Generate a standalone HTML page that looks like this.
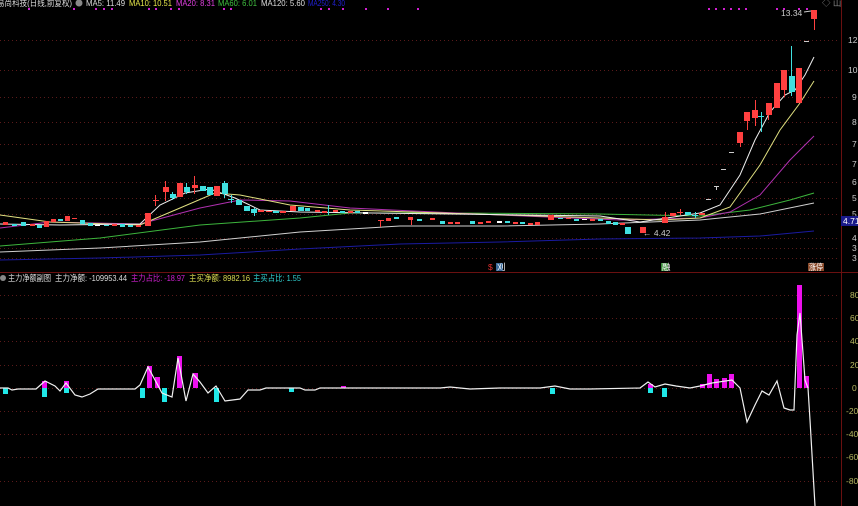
<!DOCTYPE html>
<html><head><meta charset="utf-8"><style>
html,body{margin:0;padding:0;background:#000;width:858px;height:506px;overflow:hidden}
svg{display:block}
text{font-family:"Liberation Sans","Noto Sans CJK SC",sans-serif;font-size:8.5px}
</style></head><body>
<svg width="858" height="506" viewBox="0 0 858 506" xmlns="http://www.w3.org/2000/svg">
<rect width="858" height="506" fill="#000"/>
<g stroke="#5a1a1a" stroke-width="1" stroke-dasharray="1,3">
<line x1="0" y1="40.5" x2="840" y2="40.5"/><line x1="0" y1="70.5" x2="840" y2="70.5"/><line x1="0" y1="97.5" x2="840" y2="97.5"/><line x1="0" y1="122.5" x2="840" y2="122.5"/><line x1="0" y1="144.5" x2="840" y2="144.5"/><line x1="0" y1="164.5" x2="840" y2="164.5"/><line x1="0" y1="182.5" x2="840" y2="182.5"/><line x1="0" y1="198.5" x2="840" y2="198.5"/><line x1="0" y1="214.5" x2="840" y2="214.5"/><line x1="0" y1="238.5" x2="840" y2="238.5"/><line x1="0" y1="248.5" x2="840" y2="248.5"/><line x1="0" y1="258.5" x2="840" y2="258.5"/>
<line x1="0" y1="295.5" x2="840" y2="295.5"/><line x1="0" y1="318.5" x2="840" y2="318.5"/><line x1="0" y1="341.5" x2="840" y2="341.5"/><line x1="0" y1="365.5" x2="840" y2="365.5"/><line x1="0" y1="388.5" x2="840" y2="388.5"/><line x1="0" y1="411.5" x2="840" y2="411.5"/><line x1="0" y1="434.5" x2="840" y2="434.5"/><line x1="0" y1="457.5" x2="840" y2="457.5"/><line x1="0" y1="481.5" x2="840" y2="481.5"/>
</g>
<line x1="841.5" y1="0" x2="841.5" y2="506" stroke="#6a1010"/>
<line x1="0" y1="272.5" x2="858" y2="272.5" stroke="#6a1010"/>
<!-- header -->
<text x="-3" y="6" fill="#ddd" textLength="75" lengthAdjust="spacingAndGlyphs">易尚科技(日线,前复权)</text>
<circle cx="79" cy="3" r="3.5" fill="#888"/>
<text x="86" y="6" fill="#ddd" textLength="39" lengthAdjust="spacingAndGlyphs">MA5: 11.49</text>
<text x="129" y="6" fill="#e8e84a" textLength="43" lengthAdjust="spacingAndGlyphs">MA10: 10.51</text>
<text x="176" y="6" fill="#e040e0" textLength="39" lengthAdjust="spacingAndGlyphs">MA20: 8.31</text>
<text x="218" y="6" fill="#40c040" textLength="39" lengthAdjust="spacingAndGlyphs">MA60: 6.01</text>
<text x="261" y="6" fill="#ddd" textLength="44" lengthAdjust="spacingAndGlyphs">MA120: 5.60</text>
<text x="308" y="6" fill="#2020d0" textLength="37" lengthAdjust="spacingAndGlyphs">MA250: 4.30</text>
<g fill="#d020d0">
<rect x="28" y="8" width="2" height="2"/><rect x="73" y="8" width="2" height="2"/><rect x="95" y="8" width="2" height="2"/><rect x="103" y="8" width="2" height="2"/><rect x="111" y="8" width="2" height="2"/><rect x="148" y="8" width="2" height="2"/><rect x="155" y="8" width="2" height="2"/><rect x="170" y="8" width="2" height="2"/><rect x="178" y="8" width="2" height="2"/><rect x="223" y="8" width="2" height="2"/><rect x="230" y="8" width="2" height="2"/><rect x="320" y="8" width="2" height="2"/><rect x="328" y="8" width="2" height="2"/><rect x="342" y="8" width="2" height="2"/><rect x="365" y="8" width="2" height="2"/><rect x="387" y="8" width="2" height="2"/><rect x="417" y="8" width="2" height="2"/><rect x="708" y="8" width="2" height="2"/><rect x="715" y="8" width="2" height="2"/><rect x="723" y="8" width="2" height="2"/><rect x="730" y="8" width="2" height="2"/><rect x="738" y="8" width="2" height="2"/><rect x="745" y="8" width="2" height="2"/><rect x="776" y="8" width="2" height="2"/><rect x="783" y="8" width="2" height="2"/><rect x="798" y="8" width="2" height="2"/><rect x="806" y="8" width="2" height="2"/>
</g>
<text x="822" y="6" fill="#888">◇ 山</text>
<g fill="#ccc">
<text x="848" y="43">12</text><text x="848" y="73">10</text><text x="852" y="100">9</text><text x="852" y="125">8</text><text x="852" y="147">7</text><text x="852" y="167">7</text><text x="852" y="185">6</text><text x="852" y="201">5</text><text x="852" y="217">5</text><text x="852" y="241">4</text><text x="852" y="251">3</text><text x="852" y="261">3</text>
</g>
<rect x="841" y="216" width="17" height="10" fill="#1a1a8a"/><text x="843" y="224" fill="#fff">4.71</text>
<g fill="none" stroke-width="1">
<polyline stroke="#1a1aa0" points="0,260 100,258 200,255 300,249 400,244 500,242 600,239 700,238 760,236 814,231"/>
<polyline stroke="#cfcfcf" points="0,252 100,248 200,242 300,232 400,226 500,226 600,224 700,220 760,214 814,203"/>
<polyline stroke="#3cb43c" points="0,246 100,238 200,225 300,218 350,213 450,213 600,214 700,216 750,210 790,200 814,193"/>
<polyline stroke="#b030b0" points="0,228 50,222 140,224 200,208 240,200 290,201 350,208 500,215 620,220 700,218 730,212 760,195 790,160 814,136"/>
<polyline stroke="#e0e080" points="0,215 50,222 140,225 180,208 215,193 240,195 290,205 350,210 600,218 660,220 700,218 730,207 760,165 780,130 800,103 814,81"/>
<polyline stroke="#eeeeee" points="0,224 60,225 140,224 160,205 185,193 210,189 235,198 260,210 300,212 600,216 640,222 700,213 720,205 740,175 755,140 770,112 785,95 795,90 805,75 814,57"/>
</g>
<g>
<rect x="3" y="222" width="5" height="3" fill="#ff4040"/><rect x="12" y="224" width="5" height="2" fill="#40e0e0"/><rect x="21" y="222" width="5" height="4" fill="#40e0e0"/><rect x="30" y="224" width="5" height="2" fill="#ff4040"/><rect x="37" y="225" width="5" height="3" fill="#40e0e0"/><rect x="44" y="221" width="5" height="6" fill="#ff4040"/><rect x="51" y="219" width="5" height="3" fill="#ff4040"/><rect x="58" y="219" width="5" height="2" fill="#40e0e0"/><rect x="65" y="216" width="5" height="5" fill="#ff4040"/><rect x="72" y="218" width="5" height="1" fill="#ff4040"/><rect x="80" y="220" width="5" height="4" fill="#40e0e0"/><rect x="88" y="223" width="5" height="3" fill="#40e0e0"/><rect x="95" y="225" width="5" height="1" fill="#fff"/><rect x="104" y="225" width="5" height="1" fill="#40e0e0"/><rect x="112" y="224" width="5" height="2" fill="#ff4040"/><rect x="120" y="224" width="5" height="3" fill="#40e0e0"/><rect x="128" y="225" width="5" height="2" fill="#40e0e0"/><rect x="136" y="225" width="5" height="2" fill="#ff4040"/>
</g>
<g stroke-width="1">
<rect x="145" y="213" width="6" height="13" fill="#ff4040"/>
<line x1="155.5" y1="195" x2="155.5" y2="206" stroke="#ff4040"/><rect x="153" y="200" width="6" height="1" fill="#ff4040"/>
<line x1="165.5" y1="181" x2="165.5" y2="201" stroke="#ff4040"/><rect x="163" y="187" width="6" height="5" fill="#ff4040"/>
<line x1="172.5" y1="192" x2="172.5" y2="200" stroke="#40e0e0"/><rect x="170" y="194" width="6" height="4" fill="#40e0e0"/>
<rect x="177" y="183" width="6" height="14" fill="#ff4040"/>
<line x1="186.5" y1="183" x2="186.5" y2="194" stroke="#40e0e0"/><rect x="184" y="187" width="6" height="5" fill="#40e0e0"/>
<line x1="194.5" y1="176" x2="194.5" y2="194" stroke="#ff4040"/><rect x="192" y="185" width="6" height="3" fill="#ff4040"/>
<rect x="200" y="186" width="6" height="5" fill="#40e0e0"/>
<rect x="207" y="187" width="6" height="8" fill="#40e0e0"/>
<rect x="214" y="186" width="6" height="10" fill="#ff4040"/>
<line x1="224.5" y1="181" x2="224.5" y2="198" stroke="#40e0e0"/><rect x="222" y="183" width="6" height="11" fill="#40e0e0"/>
<line x1="231.5" y1="195" x2="231.5" y2="203" stroke="#40e0e0"/><rect x="228" y="199" width="6" height="1" fill="#40e0e0"/>
<rect x="236" y="200" width="6" height="5" fill="#40e0e0"/>
<rect x="244" y="206" width="6" height="5" fill="#40e0e0"/>
<line x1="254.5" y1="208" x2="254.5" y2="216" stroke="#40e0e0"/><rect x="251" y="209" width="6" height="4" fill="#40e0e0"/>
<rect x="258" y="210" width="6" height="2" fill="#ff4040"/>
<rect x="266" y="211" width="6" height="1" fill="#ff4040"/>
<rect x="273" y="211" width="6" height="2" fill="#40e0e0"/>
<rect x="280" y="211" width="6" height="2" fill="#ff4040"/>
<rect x="290" y="206" width="6" height="5" fill="#ff4040"/>
<rect x="298" y="207" width="6" height="4" fill="#40e0e0"/>
</g>
<g>
<rect x="305" y="208" width="5" height="3" fill="#40e0e0"/><rect x="315" y="210" width="5" height="2" fill="#ff4040"/><rect x="322" y="211" width="5" height="2" fill="#ff4040"/><line x1="328.5" y1="205" x2="328.5" y2="215" stroke="#40e0e0"/><rect x="333" y="210" width="5" height="2" fill="#ff4040"/><rect x="340" y="211" width="5" height="2" fill="#40e0e0"/><rect x="348" y="211" width="5" height="2" fill="#ff4040"/><rect x="355" y="211" width="5" height="2" fill="#40e0e0"/><rect x="363" y="212" width="5" height="2" fill="#fff"/>
<line x1="380.5" y1="220" x2="380.5" y2="227" stroke="#ff4040"/><rect x="378" y="220" width="6" height="1" fill="#ff4040"/><rect x="386" y="218" width="5" height="3" fill="#ff4040"/><rect x="394" y="217" width="5" height="2" fill="#40e0e0"/><rect x="408" y="217" width="5" height="3" fill="#ff4040"/><line x1="411.5" y1="217" x2="411.5" y2="225" stroke="#ff4040"/><rect x="417" y="219" width="5" height="2" fill="#40e0e0"/><rect x="430" y="218" width="5" height="2" fill="#ff4040"/><rect x="440" y="221" width="5" height="3" fill="#40e0e0"/><rect x="448" y="222" width="5" height="2" fill="#ff4040"/><rect x="455" y="222" width="5" height="2" fill="#ff4040"/><rect x="470" y="221" width="5" height="3" fill="#40e0e0"/><rect x="478" y="222" width="5" height="2" fill="#ff4040"/><rect x="486" y="221" width="5" height="2" fill="#ff4040"/><rect x="497" y="221" width="5" height="2" fill="#fff"/><rect x="505" y="221" width="5" height="2" fill="#40e0e0"/><rect x="513" y="222" width="5" height="2" fill="#ff4040"/><rect x="520" y="222" width="5" height="2" fill="#40e0e0"/><rect x="528" y="223" width="5" height="2" fill="#ff4040"/><rect x="535" y="222" width="5" height="3" fill="#ff4040"/>
<rect x="548" y="215" width="6" height="5" fill="#ff4040"/><rect x="558" y="218" width="5" height="1" fill="#40e0e0"/><rect x="566" y="218" width="5" height="1" fill="#ff4040"/><rect x="574" y="219" width="5" height="2" fill="#40e0e0"/><rect x="582" y="219" width="5" height="1" fill="#fff"/><rect x="590" y="219" width="5" height="2" fill="#ff4040"/><rect x="598" y="219" width="5" height="2" fill="#40e0e0"/><rect x="606" y="221" width="5" height="3" fill="#40e0e0"/><rect x="613" y="222" width="5" height="3" fill="#40e0e0"/><rect x="620" y="223" width="5" height="2" fill="#ff4040"/>
<rect x="625" y="227" width="6" height="7" fill="#40e0e0"/><rect x="640" y="227" width="6" height="6" fill="#ff4040"/>
<text x="643" y="236" fill="#ccc">← 4.42</text>
</g>
<g>
<rect x="662" y="217" width="6" height="6" fill="#ff4040"/><line x1="665.5" y1="212" x2="665.5" y2="217" stroke="#ff4040"/>
<rect x="670" y="213" width="6" height="3" fill="#ff4040"/><rect x="677" y="212" width="6" height="1" fill="#ff4040"/><line x1="680.5" y1="209" x2="680.5" y2="215" stroke="#ff4040"/>
<rect x="685" y="212" width="6" height="3" fill="#40e0e0"/><rect x="692" y="215" width="6" height="1" fill="#40e0e0"/><line x1="695.5" y1="212" x2="695.5" y2="218" stroke="#40e0e0"/>
<rect x="699" y="213" width="6" height="2" fill="#ff4040"/>
<rect x="706" y="199" width="5" height="1" fill="#ccc"/><rect x="714" y="186" width="5" height="1" fill="#ccc"/><line x1="716.5" y1="186" x2="716.5" y2="190" stroke="#ccc"/><rect x="721" y="169" width="5" height="1" fill="#ccc"/><rect x="729" y="152" width="5" height="1" fill="#ccc"/>
<rect x="737" y="132" width="6" height="11" fill="#ff4040"/><line x1="740.5" y1="143" x2="740.5" y2="147" stroke="#ff4040"/>
<rect x="744" y="112" width="6" height="9" fill="#ff4040"/><line x1="747.5" y1="121" x2="747.5" y2="130" stroke="#ff4040"/>
<line x1="755.5" y1="100" x2="755.5" y2="126" stroke="#ff4040"/><rect x="752" y="110" width="6" height="8" fill="#ff4040"/>
<line x1="761.5" y1="112" x2="761.5" y2="132" stroke="#40e0e0"/><rect x="758" y="116" width="6" height="1" fill="#40e0e0"/>
<line x1="768.5" y1="103" x2="768.5" y2="120" stroke="#ff4040"/><rect x="766" y="103" width="6" height="12" fill="#ff4040"/>
<rect x="774" y="83" width="6" height="25" fill="#ff4040"/>
<line x1="784.5" y1="90" x2="784.5" y2="97" stroke="#ff4040"/><rect x="781" y="70" width="6" height="20" fill="#ff4040"/>
<line x1="791.5" y1="46" x2="791.5" y2="96" stroke="#40e0e0"/><rect x="789" y="76" width="6" height="16" fill="#40e0e0"/>
<rect x="796" y="68" width="6" height="35" fill="#ff4040"/>
<rect x="804" y="41" width="5" height="1" fill="#ccc"/>
<rect x="811" y="10" width="6" height="9" fill="#ff4040"/><line x1="814.5" y1="19" x2="814.5" y2="30" stroke="#ff4040"/>
<text x="781" y="16" fill="#ccc">13.34</text><line x1="804" y1="12" x2="811" y2="11" stroke="#ccc"/>
</g>
<text x="488" y="270" fill="#e03030" font-size="7">$</text>
<rect x="496" y="263" width="7" height="8" fill="#3a6a9a"/><text x="497" y="270" fill="#fff" font-size="7">刈</text>
<rect x="661" y="263" width="7" height="8" fill="#3a8a3a"/><text x="662" y="270" fill="#fff" font-size="7">融</text>
<rect x="808" y="263" width="16" height="8" fill="#8a4a2a"/><text x="809" y="270" fill="#fff" font-size="7" textLength="14" lengthAdjust="spacingAndGlyphs">涨停</text>
<!-- lower header -->
<circle cx="3" cy="278" r="3" fill="#888"/>
<text x="8" y="281" fill="#ddd" textLength="43" lengthAdjust="spacingAndGlyphs">主力净额副图</text>
<text x="55" y="281" fill="#ddd" textLength="72" lengthAdjust="spacingAndGlyphs">主力净额: -109953.44</text>
<text x="131" y="281" fill="#d020d0" textLength="54" lengthAdjust="spacingAndGlyphs">主力占比: -18.97</text>
<text x="189" y="281" fill="#dada50" textLength="61" lengthAdjust="spacingAndGlyphs">主买净额: 8982.16</text>
<text x="253" y="281" fill="#30d0d0" textLength="48" lengthAdjust="spacingAndGlyphs">主买占比: 1.55</text>
<g fill="#b8b860">
<text x="850" y="298">80</text><text x="850" y="321">60</text><text x="850" y="344">40</text><text x="850" y="368">20</text><text x="852" y="391">0</text><text x="846" y="414">-20</text><text x="846" y="437">-40</text><text x="846" y="460">-60</text><text x="846" y="484">-80</text>
</g>
<g fill="#20e8e8">
<rect x="3" y="388" width="5" height="6"/><rect x="42" y="388" width="5" height="9"/><rect x="64" y="388" width="5" height="5"/><rect x="140" y="388" width="5" height="10"/><rect x="162" y="388" width="5" height="14"/><rect x="214" y="388" width="5" height="14"/><rect x="289" y="388" width="5" height="4"/><rect x="550" y="388" width="5" height="6"/><rect x="648" y="388" width="5" height="5"/><rect x="662" y="388" width="5" height="9"/>
</g>
<g fill="#ee10ee">
<rect x="42" y="381" width="5" height="7"/><rect x="64" y="381" width="5" height="7"/><rect x="147" y="366" width="5" height="22"/><rect x="155" y="377" width="5" height="11"/><rect x="177" y="356" width="5" height="32"/><rect x="193" y="373" width="5" height="15"/><rect x="341" y="386" width="5" height="2"/><rect x="648" y="384" width="5" height="4"/><rect x="700" y="384" width="5" height="4"/><rect x="707" y="374" width="5" height="14"/><rect x="714" y="379" width="5" height="9"/><rect x="722" y="378" width="5" height="10"/><rect x="729" y="374" width="5" height="14"/><rect x="797" y="285" width="5" height="103"/><rect x="804" y="376" width="5" height="12"/>
</g>
<polyline fill="none" stroke="#f0f0f0" stroke-width="1.2" points="0,388 8,388 12,390 18,389 36,389 45,381 55,386 60,391 66,383 75,395 82,397 90,394 98,389 135,389 140,385 148,367 155,380 162,393 172,397 178,358 186,401 193,374 200,382 208,393 216,386 225,401 240,399 248,390 260,390 266,388 300,388 305,390 315,390 320,388 440,388 450,387 470,389 500,388 540,388 555,386 570,389 590,389 640,388 648,382 655,387 665,384 676,386 690,388 700,386 712,383 732,380 740,388 747,422 755,405 762,391 769,395 777,381 784,408 790,410 794,410 797,335 800,313 805,380 808,388 810,420 815,506"/>
</svg>
</body></html>
